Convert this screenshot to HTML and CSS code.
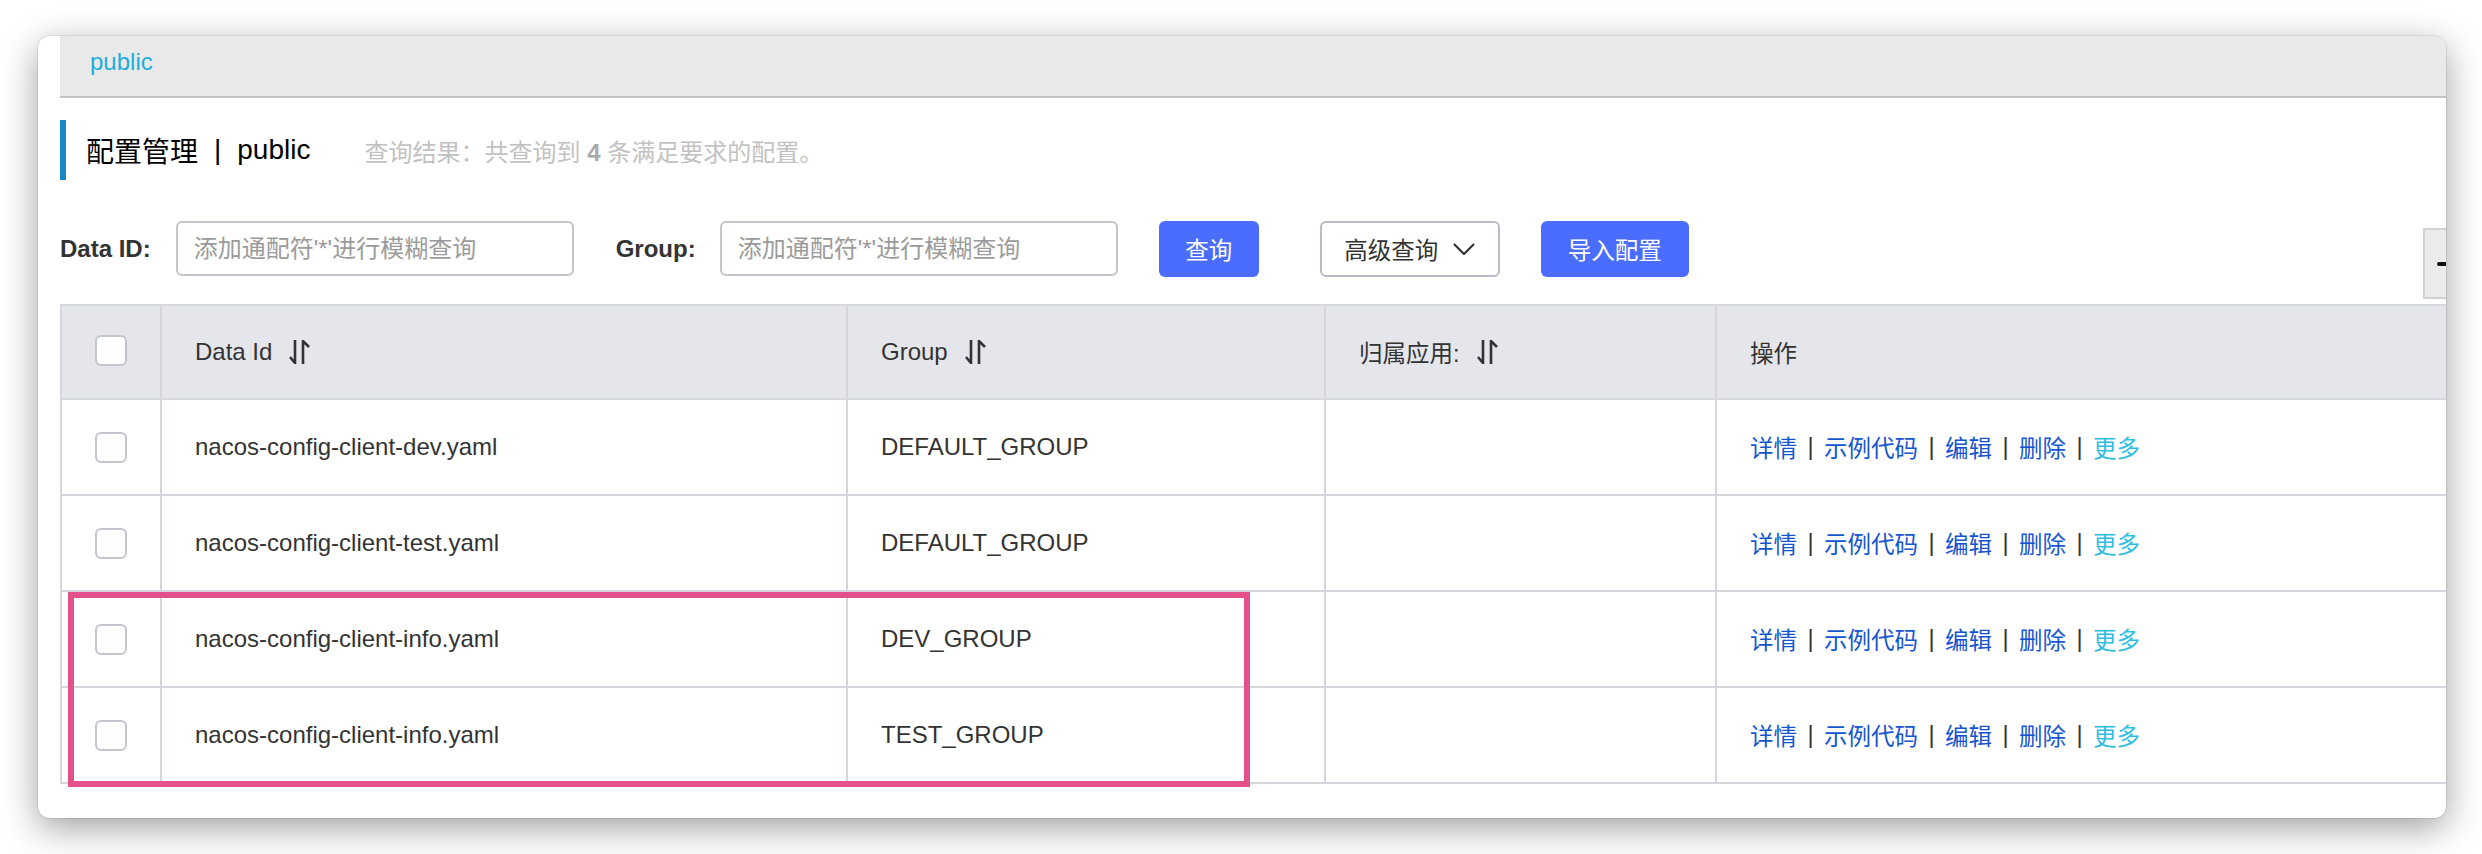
FILE: index.html
```html
<!DOCTYPE html>
<html lang="zh-CN">
<head>
<meta charset="utf-8">
<title>配置管理</title>
<link rel="stylesheet" href="styles.css">
</head>
<body>
<div class="window">
  <div class="content">
    <div class="header"><span class="ns">public</span></div>

    <div class="title-bar">
      <span class="title">配置管理</span><span class="title-sep">|</span><span class="title">public</span>
      <span class="subtitle">查询结果：共查询到 <b>4</b> 条满足要求的配置。</span>
    </div>

    <div class="search-row">
      <label class="lbl">Data ID:</label>
      <input class="inp inp-first" type="text" placeholder="添加通配符'*'进行模糊查询">
      <label class="lbl lbl-group">Group:</label>
      <input class="inp inp-second" type="text" placeholder="添加通配符'*'进行模糊查询">
      <button class="btn btn-primary btn-query">查询</button>
      <button class="btn btn-adv">高级查询<svg class="chev" viewBox="0 0 22 12" width="22" height="12"><polyline points="1,1 11,11 21,1"/></svg></button>
      <button class="btn btn-primary btn-import">导入配置</button>
      <div class="side-box"><span class="dash"></span></div>
    </div>

    <div class="table">
      <div class="trow thead">
        <div class="cell cell-check"><span class="checkbox"></span></div>
        <div class="cell"><span class="htext">Data Id</span><svg class="sort" viewBox="0 0 21 24" width="21" height="24"><path d="M6 0 V23 L1 17"/><path d="M14 24 V1 L20 7"/></svg></div>
        <div class="cell"><span class="htext">Group</span><svg class="sort" viewBox="0 0 21 24" width="21" height="24"><path d="M6 0 V23 L1 17"/><path d="M14 24 V1 L20 7"/></svg></div>
        <div class="cell"><span class="htext cjk">归属应用:</span><svg class="sort" viewBox="0 0 21 24" width="21" height="24"><path d="M6 0 V23 L1 17"/><path d="M14 24 V1 L20 7"/></svg></div>
        <div class="cell cell-last"><span class="htext cjk">操作</span></div>
      </div>

      <div class="trow">
        <div class="cell cell-check"><span class="checkbox"></span></div>
        <div class="cell">nacos-config-client-dev.yaml</div>
        <div class="cell">DEFAULT_GROUP</div>
        <div class="cell"></div>
        <div class="cell cell-last actions"><a class="lnk">详情</a><span class="sep">|</span><a class="lnk">示例代码</a><span class="sep">|</span><a class="lnk">编辑</a><span class="sep">|</span><a class="lnk">删除</a><span class="sep">|</span><a class="lnk more">更多</a></div>
      </div>

      <div class="trow">
        <div class="cell cell-check"><span class="checkbox"></span></div>
        <div class="cell">nacos-config-client-test.yaml</div>
        <div class="cell">DEFAULT_GROUP</div>
        <div class="cell"></div>
        <div class="cell cell-last actions"><a class="lnk">详情</a><span class="sep">|</span><a class="lnk">示例代码</a><span class="sep">|</span><a class="lnk">编辑</a><span class="sep">|</span><a class="lnk">删除</a><span class="sep">|</span><a class="lnk more">更多</a></div>
      </div>

      <div class="trow">
        <div class="cell cell-check"><span class="checkbox"></span></div>
        <div class="cell">nacos-config-client-info.yaml</div>
        <div class="cell">DEV_GROUP</div>
        <div class="cell"></div>
        <div class="cell cell-last actions"><a class="lnk">详情</a><span class="sep">|</span><a class="lnk">示例代码</a><span class="sep">|</span><a class="lnk">编辑</a><span class="sep">|</span><a class="lnk">删除</a><span class="sep">|</span><a class="lnk more">更多</a></div>
      </div>

      <div class="trow">
        <div class="cell cell-check"><span class="checkbox"></span></div>
        <div class="cell">nacos-config-client-info.yaml</div>
        <div class="cell">TEST_GROUP</div>
        <div class="cell"></div>
        <div class="cell cell-last actions"><a class="lnk">详情</a><span class="sep">|</span><a class="lnk">示例代码</a><span class="sep">|</span><a class="lnk">编辑</a><span class="sep">|</span><a class="lnk">删除</a><span class="sep">|</span><a class="lnk more">更多</a></div>
      </div>
    </div>
  </div>

  <div class="highlight"></div>
</div>
</body>
</html>
```

FILE: styles.css
```css
html, body {
  margin: 0;
  padding: 0;
  background: #ffffff;
}

body {
  font-family: "Liberation Sans", "Noto Sans CJK SC", sans-serif;
  color: #333333;
  padding-top: 36px;
  padding-left: 38px;
  height: 854px;
  box-sizing: border-box;
  overflow: hidden;
}

.window {
  position: relative;
  width: 2408px;
  height: 782px;
  background: #ffffff;
  border-radius: 12px;
  overflow: hidden;
  box-shadow: 0 10px 36px rgba(0, 0, 0, 0.38), 0 0 0 1px rgba(0, 0, 0, 0.08);
}

.content {
  width: 2500px;
  padding-left: 22px;
}

/* top namespace bar */
.header {
  height: 60px;
  background: #e9e9e9;
  border-bottom: 2px solid #c4c4c4;
  display: flex;
  align-items: center;
  padding-left: 30px;
}

.ns {
  color: #1cafd9;
  font-size: 24px;
  position: relative;
  top: -4px;
}

/* title */
.title-bar {
  margin-top: 22px;
  height: 60px;
  border-left: 6px solid #1787c7;
  padding-left: 20px;
  display: flex;
  align-items: center;
}

.title {
  font-size: 28px;
  color: #000000;
}

.title-sep {
  font-size: 28px;
  color: #000000;
  margin: 0 16px;
}

.subtitle {
  margin-left: 54px;
  font-size: 24px;
  color: #c2c2c2;
}

.subtitle b {
  color: #a9a9a9;
}

/* search row */
.search-row {
  margin-top: 41px;
  height: 55px;
  display: flex;
  align-items: center;
}

.lbl {
  font-size: 24px;
  font-weight: bold;
  color: #333333;
}

.lbl-group {
  margin-left: 42px;
}

.inp {
  box-sizing: border-box;
  width: 398px;
  height: 55px;
  border: 2px solid #c4c6cf;
  border-radius: 6px;
  padding: 0 16px;
  font-family: "Liberation Sans", "Noto Sans CJK SC", sans-serif;
  font-size: 24px;
  color: #333333;
  outline: none;
  background: #ffffff;
}

.inp::placeholder {
  color: #9b9b9b;
}

.inp-first {
  margin-left: 25px;
}

.inp-second {
  margin-left: 24px;
}

.btn {
  box-sizing: border-box;
  height: 56px;
  border-radius: 6px;
  font-family: "Liberation Sans", "Noto Sans CJK SC", sans-serif;
  font-size: 23.5px;
  display: flex;
  align-items: center;
  justify-content: center;
  padding: 0;
}

.btn-primary {
  background: #4a6dfe;
  border: none;
  color: #ffffff;
}

.btn-query {
  margin-left: 41px;
  width: 100px;
}

.btn-adv {
  margin-left: 61px;
  width: 180px;
  background: #ffffff;
  border: 2px solid #b9bcc6;
  color: #333333;
  gap: 15px;
}

.chev {
  fill: none;
  stroke: #333333;
  stroke-width: 2.2;
}

.btn-import {
  margin-left: 41px;
  width: 148px;
}

.side-box {
  margin-left: auto;
  align-self: flex-start;
  margin-top: 7px;
  box-sizing: border-box;
  width: 137px;
  height: 71px;
  background: #ebebeb;
  border: 2px solid #d2d2d2;
  display: flex;
  align-items: center;
  padding-left: 12px;
}

.dash {
  display: block;
  width: 20px;
  height: 4px;
  border-radius: 2px;
  background: #111111;
}

/* table */
.table {
  margin-top: 28px;
  border-top: 2px solid #d5d7de;
  border-left: 2px solid #d5d7de;
}

.trow {
  display: grid;
  grid-template-columns: 100px 686px 478px 391px 1fr;
  height: 96px;
  box-sizing: border-box;
  border-bottom: 2px solid #d5d7de;
}

.thead {
  height: 94px;
  background: #e5e6eb;
}

.cell {
  box-sizing: border-box;
  border-right: 2px solid #d5d7de;
  display: flex;
  align-items: center;
  padding-left: 33px;
  font-size: 24px;
  color: #333333;
  white-space: nowrap;
}

.cell-last {
  border-right: none;
}

.cell-check {
  padding-left: 0;
  justify-content: center;
}

.checkbox {
  display: block;
  box-sizing: border-box;
  width: 32px;
  height: 31px;
  border: 2px solid #c2c5ce;
  border-radius: 6px;
  background: #ffffff;
}

.thead .checkbox {
  position: relative;
  top: -2px;
}

.htext {
  font-size: 24px;
  color: #333333;
}

.htext.cjk {
  font-size: 23.5px;
}

.sort {
  margin-left: 17px;
  fill: none;
  stroke: #333333;
  stroke-width: 2.6;
}

.actions {
  font-size: 23.5px;
}

.lnk {
  color: #1456d0;
  text-decoration: none;
}

.lnk.more {
  color: #2ebee2;
}

.sep {
  display: inline-block;
  width: 27px;
  text-align: center;
  color: #333333;
}

/* annotation */
.highlight {
  position: absolute;
  left: 30px;
  top: 556px;
  width: 1182px;
  height: 195px;
  box-sizing: border-box;
  border: 6px solid #e4508a;
}
```
